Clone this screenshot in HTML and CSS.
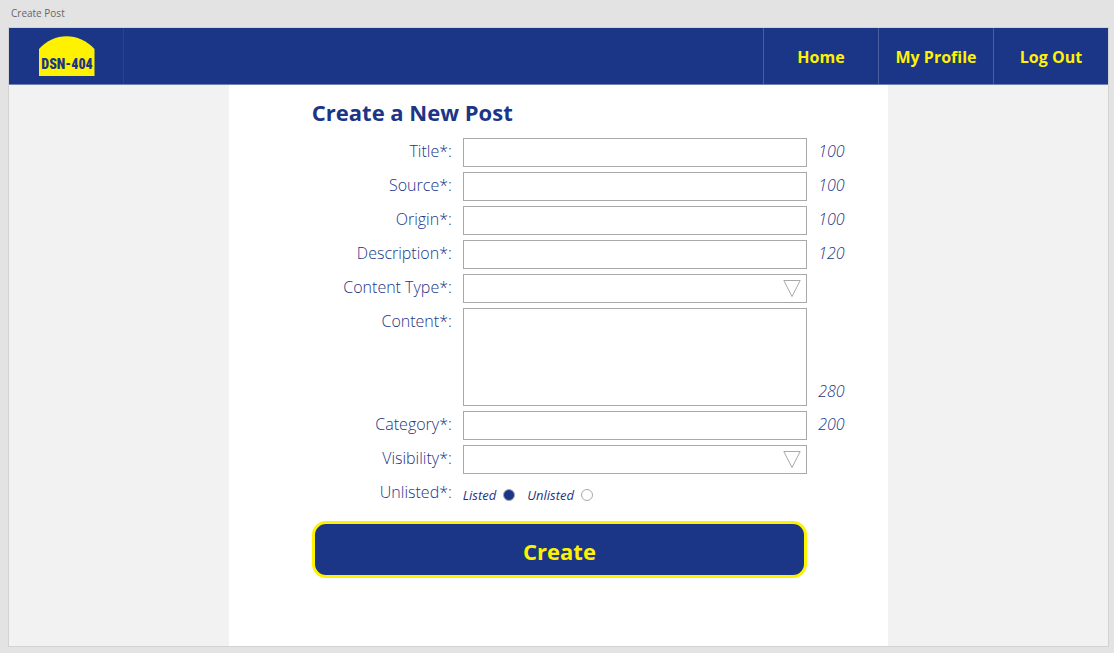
FILE: index.html
```html
<!DOCTYPE html>
<html lang="en">
<head>
<meta charset="utf-8">
<meta name="viewport" content="width=device-width, initial-scale=1">
<title>Create Post</title>
<link rel="stylesheet" href="styles.css">
</head>
<body>
<p class="board-name">Create Post</p>
<div class="board">
  <header class="nav">
    <a class="logo" href="#" aria-label="DSN-404">
      <svg width="56" height="40" viewBox="0 0 56 40" aria-hidden="true">
        <path class="logo-shape" d="M0 13C15-4 40-4 55.500 13V40H0Z"/>
        <text class="logo-text" x="28" y="33" text-anchor="middle">DSN-404</text>
      </svg>
    </a>
    <nav class="links">
      <a class="link" href="#">Home</a>
      <a class="link" href="#">My Profile</a>
      <a class="link" href="#">Log Out</a>
    </nav>
  </header>
  <main class="page">
    <h1 class="heading">Create a New Post</h1>
    <form class="form">
      <label class="label" for="title">Title*:</label>
      <input class="field" id="title" type="text" maxlength="100">
      <span class="count">100</span>

      <label class="label" for="source">Source*:</label>
      <input class="field" id="source" type="text" maxlength="100">
      <span class="count">100</span>

      <label class="label" for="origin">Origin*:</label>
      <input class="field" id="origin" type="text" maxlength="100">
      <span class="count">100</span>

      <label class="label" for="description">Description*:</label>
      <input class="field" id="description" type="text" maxlength="120">
      <span class="count">120</span>

      <label class="label" for="type">Content Type*:</label>
      <div class="select">
        <select class="field" id="type"><option></option></select>
        <svg class="arrow" width="18" height="18" viewBox="0 0 18 18" aria-hidden="true"><path d="M.8.500H17.200L9 16.500Z"/></svg>
      </div>

      <label class="label" for="content">Content*:</label>
      <textarea class="field area" id="content" maxlength="280"></textarea>
      <span class="count count-end">280</span>

      <label class="label" for="category">Category*:</label>
      <input class="field" id="category" type="text" maxlength="200">
      <span class="count">200</span>

      <label class="label" for="visibility">Visibility*:</label>
      <div class="select">
        <select class="field" id="visibility"><option></option></select>
        <svg class="arrow" width="18" height="18" viewBox="0 0 18 18" aria-hidden="true"><path d="M.8.500H17.200L9 16.500Z"/></svg>
      </div>

      <span class="label" id="unlisted-label">Unlisted*:</span>
      <div class="choices" role="radiogroup" aria-labelledby="unlisted-label">
        <label class="choice">Listed <input class="radio" type="radio" name="listed" checked></label>
        <label class="choice">Unlisted <input class="radio" type="radio" name="listed"></label>
      </div>

      <button class="create" type="button">Create</button>
    </form>
  </main>
</div>
</body>
</html>
```
FILE: styles.css
```css
* {
  box-sizing: border-box;
}

body {
  margin: 0;
  min-height: 100vh;
  padding: 5px 5px 6px 8px;
  display: flex;
  flex-direction: column;
  background: #e3e3e3;
  color: #1b3587;
  font-family: "Segoe UI", "Open Sans", "Noto Sans", sans-serif;
}

.board-name {
  margin: 0 0 6px 3px;
  color: #666;
  font-size: 10px;
  line-height: 16px;
}

.board {
  flex: 1;
  display: flex;
  flex-direction: column;
  border: 1px solid #d3d3d3;
  background: #f2f2f2;
}

.nav {
  display: flex;
  justify-content: space-between;
  height: 57px;
  background: #1b3587;
  border-bottom: 1px solid #7483b5;
}

.logo {
  width: 115px;
  display: flex;
  align-items: center;
  justify-content: center;
  padding-left: 1px;
  border-right: 1px solid #29428f;
}

.logo-shape {
  fill: #fff200;
}

.logo-text {
  fill: #1b3587;
  font: 900 14px "Roboto Condensed", "Liberation Sans Narrow", "Liberation Sans", sans-serif;
}

.links {
  display: flex;
}

.link {
  width: 115px;
  display: flex;
  align-items: center;
  justify-content: center;
  padding-top: 2px;
  border-left: 1px solid #4a5f9f;
  color: #fff200;
  font-size: 16px;
  font-weight: 700;
  text-decoration: none;
}

.page {
  flex: 1;
  width: 60%;
  margin: 0 auto;
  padding: 11px 41px 20px 83px;
  background: #fff;
}

.heading {
  margin: 0 0 10px;
  font-size: 22px;
  font-weight: 700;
  line-height: 32px;
}

.form {
  display: grid;
  grid-template-columns: 140px 1fr 29px;
  gap: 5px 11px;
}

.label {
  grid-column: 1;
  text-align: right;
  font-size: 16px;
  font-weight: 350;
  line-height: 26px;
}

.field {
  display: block;
  width: 100%;
  height: 29px;
  margin: 0;
  padding: 2px 8px;
  border: 1px solid #a9a9a9;
  border-radius: 0;
  background: #fff;
  color: inherit;
  font: inherit;
  appearance: none;
}

.area {
  height: 98px;
  resize: none;
}

.select {
  position: relative;
}

.arrow {
  position: absolute;
  top: 6px;
  right: 6px;
  fill: none;
  stroke: #a9a9a9;
  pointer-events: none;
}

.count {
  font-size: 16px;
  font-style: italic;
  font-weight: 350;
  line-height: 26px;
}

.count-end {
  align-self: end;
  padding-bottom: 2px;
}

.choices {
  display: flex;
  gap: 12px;
  height: 29px;
  padding-top: 6px;
}

.choice {
  display: flex;
  gap: 7px;
  font-size: 13px;
  font-style: italic;
  line-height: 21px;
}

.radio {
  width: 12px;
  height: 12px;
  margin: 4px 0 0;
  border: 1px solid #a9a9a9;
  border-radius: 50%;
  background: #fff;
  appearance: none;
}

.radio:checked {
  background: #1b3587;
}

.create {
  grid-column: 1 / 3;
  height: 57px;
  margin-top: 8px;
  padding: 2px 0 0;
  border: 3px solid #fff200;
  border-radius: 14px;
  background: #1b3587;
  color: #fff200;
  font: inherit;
  font-size: 22px;
  font-weight: 700;
}
```
